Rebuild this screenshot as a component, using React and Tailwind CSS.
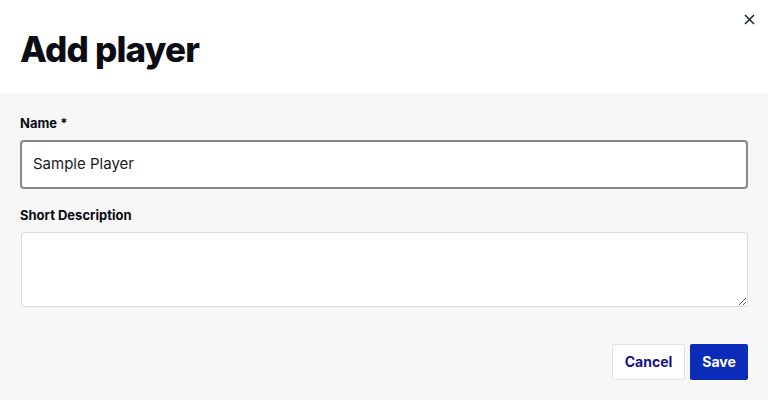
export default function App() {
  return (
    <div className="w-[768px] h-[400px] bg-[#f7f7f7] flex flex-col" style={{ fontFamily: "Inter, 'Liberation Sans', sans-serif" }}>
      <div className="bg-white h-[93px] relative px-5 flex items-start">
        <h1 className="mt-[27px] text-[35px] leading-[44px] font-extrabold text-[#0b0c14] tracking-[-0.8px]">Add player</h1>
        <button className="absolute right-[13px] top-[13px] w-[12px] h-[12px] flex items-center justify-center">
          <svg width="11" height="11" viewBox="0 0 11 11" fill="none" stroke="#1f2937" strokeWidth="1.6">
            <path d="M1 1L10 10M10 1L1 10" />
          </svg>
        </button>
      </div>
      <div className="px-5 flex flex-col">
        <label className="mt-[22px] text-[13px] leading-[16px] font-bold text-[#0b0c14]">Name *</label>
        <div className="mt-[9px] h-[49px] bg-white border-2 border-[#88888c] rounded-[4px] flex items-center px-[11px] text-[15px] text-[#1b1b1f]">
          Sample Player
        </div>
        <label className="mt-[18px] text-[13px] leading-[16px] font-bold text-[#0b0c14]">Short Description</label>
        <textarea className="mt-[9px] ml-px h-[75px] bg-white border border-[#dcdcdc] rounded-[3px] resize-y" />
        <div className="mt-[37px] flex justify-end gap-[5px]">
          <button className="w-[73px] h-[36px] bg-white border border-[#e2e2e2] rounded-[2px] text-[14px] leading-[16px] font-bold text-[#14128a]">Cancel</button>
          <button className="w-[58px] h-[36px] bg-[#0a2cb9] rounded-[2px] text-[14px] leading-[16px] font-bold text-white">Save</button>
        </div>
      </div>
    </div>
  );
}
